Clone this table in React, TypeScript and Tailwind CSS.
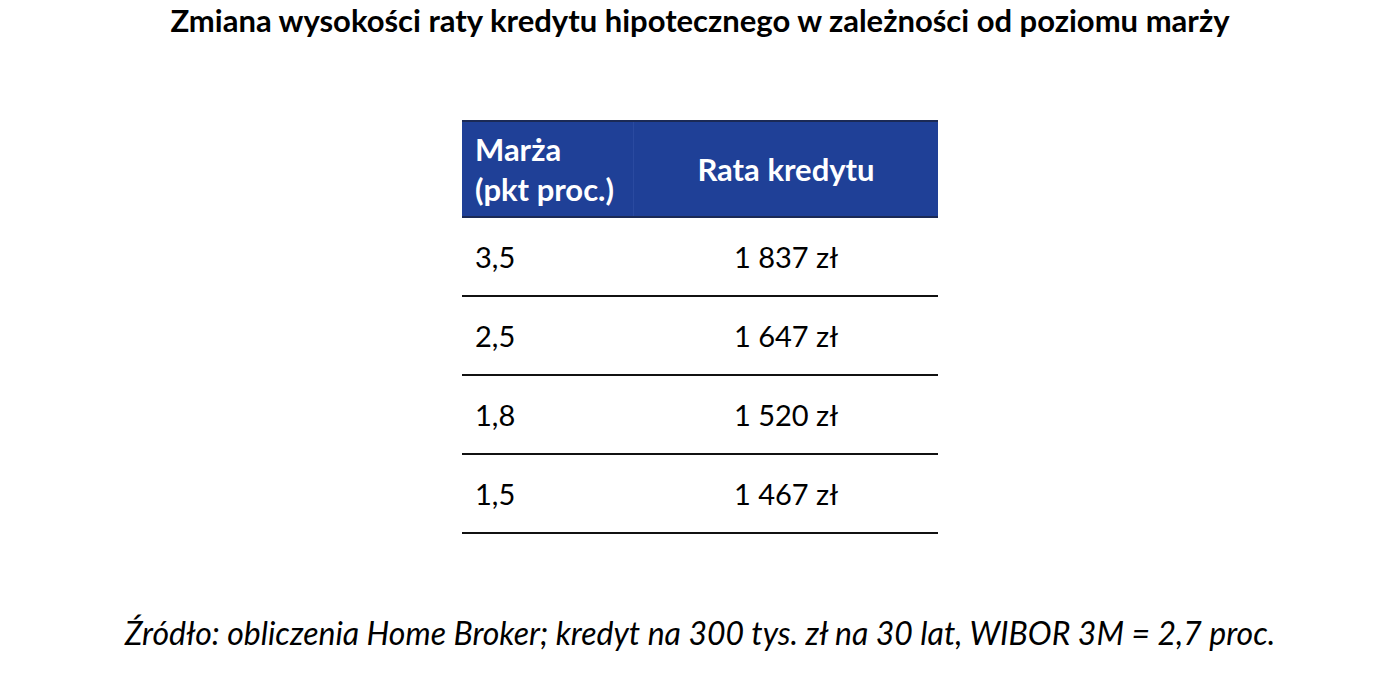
import React from "react";

const rows = [
  { margin: "3,5", rate: "1 837 zł" },
  { margin: "2,5", rate: "1 647 zł" },
  { margin: "1,8", rate: "1 520 zł" },
  { margin: "1,5", rate: "1 467 zł" }
];

export default function App() {
  return (
    <div className="w-[1400px] h-[692px] bg-white text-black flex flex-col items-center font-['Lato',sans-serif]">
      <h1 className="mt-[2px] text-[31px] leading-[36px] font-bold">
        Zmiana wysokości raty kredytu hipotecznego w zależności od poziomu marży
      </h1>

      <div className="mt-[82px] w-[476px] border-t-2 border-[#1b2a55]">
        <div className="flex h-[94px] bg-[#1f4097] text-white font-bold text-[31px] leading-[40px]">
          <div className="w-[172px] px-[13px] flex flex-col justify-center border-r border-[#2a4aa0]">
            <span>Marża</span>
            <span>(pkt proc.)</span>
          </div>
          <div className="flex-1 flex items-center justify-center">Rata kredytu</div>
        </div>
        <div className="border-t-2 border-[#1b2a55]" />
        {rows.map((row) => (
          <div
            key={row.margin}
            className="flex h-[79px] items-center border-b-2 border-[#111] text-[29px]"
          >
            <div className="w-[172px] px-[13px]">{row.margin}</div>
            <div className="flex-1 text-center">{row.rate}</div>
          </div>
        ))}
      </div>

      <p className="mt-[80px] text-[32px] italic leading-[38px]">
        Źródło: obliczenia Home Broker; kredyt na 300 tys. zł na 30 lat, WIBOR 3M = 2,7 proc.
      </p>
    </div>
  );
}
